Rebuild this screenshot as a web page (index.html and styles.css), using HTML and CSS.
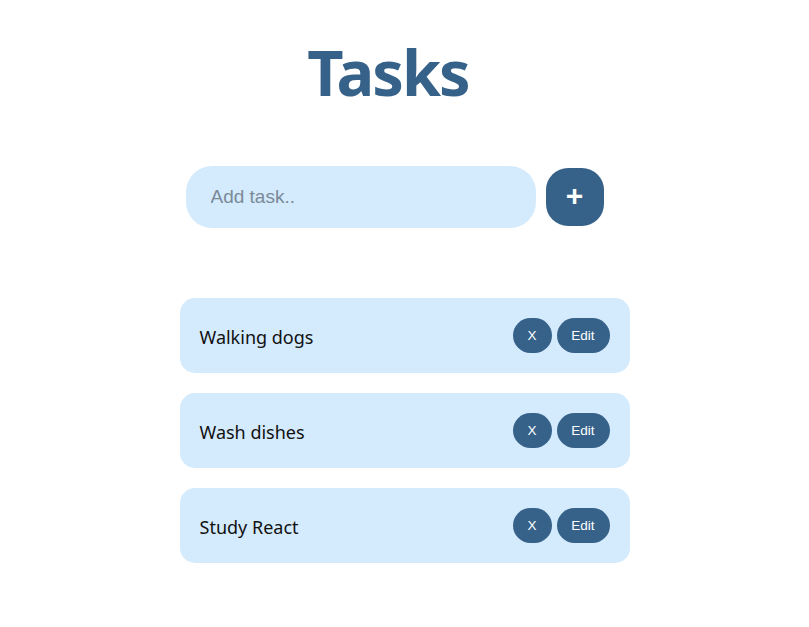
FILE: index.html
```html
<!DOCTYPE html>
<html>
<head>
<meta charset="utf-8">
<link rel="stylesheet" href="styles.css">
</head>
<body>
<div class="app">
  <h1 class="title">Tasks</h1>
  <form class="add-form">
    <input class="add-input" type="text" placeholder="Add task..">
    <button class="add-btn" type="button">+</button>
  </form>
  <ul class="task-list">
    <li class="task">
      <span class="task-name">Walking dogs</span>
      <div class="task-actions"><button class="btn btn-x">X</button><button class="btn btn-edit">Edit</button></div>
    </li>
    <li class="task">
      <span class="task-name">Wash dishes</span>
      <div class="task-actions"><button class="btn btn-x">X</button><button class="btn btn-edit">Edit</button></div>
    </li>
    <li class="task">
      <span class="task-name">Study React</span>
      <div class="task-actions"><button class="btn btn-x">X</button><button class="btn btn-edit">Edit</button></div>
    </li>
  </ul>
</div>
</body>
</html>
```
FILE: styles.css
```css
* { box-sizing: border-box; }
html, body { margin: 0; padding: 0; background: #fff; }
body { font-family: "Noto Sans", "Open Sans", sans-serif; }
.app {
  width: 809px;
  display: flex;
  flex-direction: column;
  align-items: center;
}
.title {
  margin: 28px 0 0 -33px;
  font-family: "Noto Sans", sans-serif;
  font-weight: 700;
  font-size: 63px;
  line-height: 88px;
  color: #36628a;
  letter-spacing: -2px;
}
.add-form {
  margin: 50px 0 0 -20px;
  display: flex;
  align-items: center;
  gap: 10px;
}
.add-input {
  width: 350px;
  height: 62px;
  border: none;
  border-radius: 26px;
  background: #d4eafd;
  padding: 0 25px;
  font-family: "Liberation Sans", Arial, sans-serif;
  font-size: 19px;
  color: #222;
  outline: none;
}
.add-input::placeholder { color: #7a8a98; }
.add-btn {
  width: 58px;
  height: 58px;
  border: none;
  border-radius: 22px;
  background: #36628a;
  color: #fff;
  font-family: "Liberation Sans", Arial, sans-serif;
  font-weight: 700;
  font-size: 30px;
  line-height: 1;
  padding: 0 0 3px;
}
.task-list {
  list-style: none;
  margin: 70px 0 0;
  padding: 0;
  display: flex;
  flex-direction: column;
  gap: 20px;
}
.task {
  width: 450px;
  height: 75px;
  border-radius: 15px;
  background: #d4eafd;
  display: flex;
  align-items: center;
  justify-content: space-between;
  padding: 0 20px;
}
.task-name {
  font-size: 18px;
  color: #111;
  padding-top: 2px;
}
.task-actions { display: flex; gap: 5px; }
.btn {
  height: 35px;
  border: none;
  border-radius: 18px;
  background: #36628a;
  color: #fff;
  font-family: "Liberation Sans", Arial, sans-serif;
  font-size: 13.5px;
  padding: 0;
}
.btn-x { width: 39px; }
.btn-edit { width: 53px; }
```
